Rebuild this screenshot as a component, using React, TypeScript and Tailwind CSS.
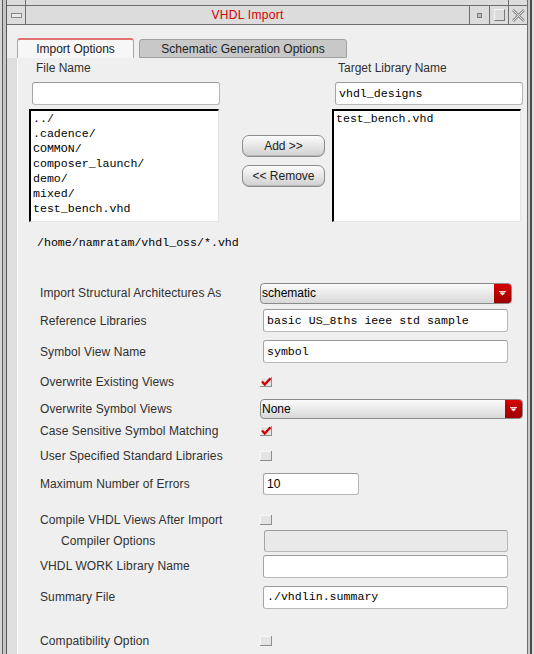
import type { ReactNode } from "react";

const sans = "font-['Liberation_Sans',Arial,sans-serif]";
const mono = "font-['Liberation_Mono','Courier_New',monospace]";

const CheckBox = ({ checked }: { checked?: boolean }) => (
    <svg width="12" height="10" viewBox="0 0 12 10">
        <rect x="0.5" y="0.5" width="11" height="9" fill="#e4e4e4" stroke="#f6f6f6" />
        <path d="M0 9.5H12M11.5 0V10" stroke="#8e8e8e" />
        {checked && <path d="M2 4.5 L4.8 7.6 L10.5 1.2" stroke="#cc0000" strokeWidth="2.3" fill="none" />}
    </svg>
);

const Dropdown = ({ value, className }: { value: string; className: string }) => (
    <div className={`flex rounded-[4px] border border-[#8a8a8a] bg-linear-to-b from-[#fbfbfb] to-[#d8d8d8] overflow-hidden ${className}`}>
        <div className={`flex-1 pl-[1px] text-[12px] text-black flex items-center ${sans}`}>{value}</div>
        <div className="w-[17px] bg-linear-to-b from-[#d70000] to-[#9c0000] flex items-center justify-center">
            <svg width="7" height="5" viewBox="0 0 7 5">
                <path d="M0 0.5H7" stroke="#ffd0d0" />
                <path d="M0.5 1.5 L6.5 1.5 L3.5 4.5 Z" fill="#ffffff" />
            </svg>
        </div>
    </div>
);

const Field = ({ value, className, fontClass, disabled }: { value?: string; className: string; fontClass?: string; disabled?: boolean }) => (
    <div
        className={`rounded-[3px] border border-[#b8b8b8] border-t-[#9a9a9a] border-l-[#a4a4a4] flex items-center pl-[3px] text-[11.6px] text-black ${disabled ? "bg-[#e9e9e9]" : "bg-white"} ${fontClass ?? mono} ${className}`}
    >
        {value}
    </div>
);

const Row = ({ label, className, indent, children }: { label: string; className: string; indent?: boolean; children?: ReactNode }) => (
    <div className={`flex items-center ${className}`}>
        <div className={`w-[242px] shrink-0 text-[12px] tracking-[0.1px] text-[#303030] ${indent ? "pl-[43px]" : "pl-[22px]"}`}>{label}</div>
        {children}
    </div>
);

const GelButton = ({ children }: { children: ReactNode }) => (
    <button className="h-[22px] w-[83px] rounded-[7px] border border-[#8c8c8c] bg-linear-to-b from-[#fcfcfc] to-[#d0d0d0] text-[12px] text-[#222] shadow-[inset_0_-1px_0_#b8b8b8]">
        {children}
    </button>
);

export default function App() {
    const files = ["../", ".cadence/", "COMMON/", "composer_launch/", "demo/", "mixed/", "test_bench.vhd"];

    return (
        <div className={`w-[534px] h-[654px] flex overflow-hidden bg-[#dcdcdc] ${sans}`}>
            {/* left window frame */}
            <div className="w-[7px] flex shrink-0">
                <div className="w-[2px] bg-[#d6d6d6]" />
                <div className="w-[1px] bg-[#5a5a5a]" />
                <div className="w-[3px] bg-[#c6c6c6]" />
                <div className="w-[1px] bg-[#5a5a5a]" />
            </div>

            <div className="flex-1 flex flex-col min-w-0">
                {/* top strip */}
                <div className="h-[6px] flex border-b border-[#6e6e6e] bg-[#dcdcdc]">
                    <div className="w-[19px] border-r border-[#6e6e6e]" />
                    <div className="flex-1" />
                    <div className="w-[19px] border-l border-[#6e6e6e]" />
                </div>

                {/* title bar */}
                <div className="h-[19px] flex border-b border-[#6e6e6e] bg-[#dcdcdc]">
                    <div className="w-[19px] border-r border-[#6e6e6e] flex items-center justify-center">
                        <div className="w-[11px] h-[5px] border border-[#8a8a8a] bg-[#e8e8e8]" />
                    </div>
                    <div className="flex-1 flex items-center justify-center text-[12px] tracking-[0.3px] text-[#d00000]">VHDL Import</div>
                    <div className="w-[20px] border-l border-[#6e6e6e] flex items-center justify-center">
                        <div className="w-[5px] h-[5px] border border-[#7a7a7a] bg-[#bdbdbd]" />
                    </div>
                    <div className="w-[19px] border-l border-[#6e6e6e] flex items-center justify-center">
                        <div className="w-[11px] h-[12px] border border-t-[#f4f4f4] border-l-[#f4f4f4] border-r-[#7a7a7a] border-b-[#7a7a7a]" />
                    </div>
                    <div className="w-[19px] border-l border-[#6e6e6e] flex items-center justify-center">
                        <svg width="13" height="13" viewBox="0 0 13 13">
                            <path d="M1 1 L12 12 M12 1 L1 12" stroke="#8a8a8a" strokeWidth="2.6" />
                            <path d="M1 1 L12 12 M12 1 L1 12" stroke="#e6e6e6" strokeWidth="1" />
                        </svg>
                    </div>
                </div>

                {/* body */}
                <div className="flex-1 flex flex-col bg-[#efefef] min-h-0">
                    {/* tabs */}
                    <div className="pt-[13px] pl-[10px] flex items-end gap-[5px]">
                        <div className="h-[20px] w-[117px] rounded-t-[3px] border-x border-[#a8a8a8] border-t-2 border-t-[#e07272] bg-[#f7f7f7] flex items-center justify-center text-[12px] text-[#222]">
                            Import Options
                        </div>
                        <div className="h-[19px] w-[208px] rounded-t-[3px] border border-[#a0a0a0] bg-[#c8c8c8] flex items-center justify-center text-[12px] text-[#222]">
                            Schematic Generation Options
                        </div>
                    </div>

                    <div className="flex-1 flex min-h-0">
                        <div className="w-[10px] bg-[#dedede]" />
                        <div className="flex-1 border-l border-white bg-[#efefef] flex flex-col overflow-hidden">
                            {/* file selection */}
                            <div className="flex pl-[11px]">
                                <div className="w-[191px] flex flex-col">
                                    <div className="h-[16px] mt-[2px] pl-[7px] text-[12px] leading-[16px] text-[#303030]">File Name</div>
                                    <Field className="h-[23px] mt-[6px] ml-[3px] w-[188px]" />
                                    <div className={`mt-[4px] w-[190px] h-[113px] bg-white border-t-2 border-l-2 border-black border-r border-b border-r-[#e4e4e4] border-b-[#e4e4e4] pl-[2px] text-[11.6px] leading-[15px] text-black ${mono}`}>
                                        {files.map((f) => (
                                            <div key={f} className="whitespace-pre">{f}</div>
                                        ))}
                                    </div>
                                </div>
                                <div className="ml-[22px] pt-[77px] flex flex-col gap-[8px]">
                                    <GelButton>Add &gt;&gt;</GelButton>
                                    <GelButton>&lt;&lt; Remove</GelButton>
                                </div>
                                <div className="ml-[7px] w-[190px] flex flex-col">
                                    <div className="h-[16px] mt-[2px] pl-[6px] text-[12px] leading-[16px] text-[#303030]">Target Library Name</div>
                                    <Field value="vhdl_designs" className="h-[23px] mt-[6px] ml-[3px] w-[188px]" />
                                    <div className={`mt-[4px] w-[189px] h-[113px] bg-white border-t-2 border-l-2 border-black border-r border-b border-r-[#e4e4e4] border-b-[#e4e4e4] pl-[2px] text-[11.6px] leading-[15px] text-black ${mono}`}>
                                        <div>test_bench.vhd</div>
                                    </div>
                                </div>
                            </div>

                            <div className={`mt-[14px] pl-[19px] h-[14px] leading-[14px] text-[11.6px] text-black ${mono}`}>/home/namratam/vhdl_oss/*.vhd</div>

                            {/* options form */}
                            <div className="mt-[31px] flex flex-col">
                                <Row label="Import Structural Architectures As" className="h-[24px]">
                                    <Dropdown value="schematic" className="h-[21px] w-[252px]" />
                                </Row>
                                <Row label="Reference Libraries" className="h-[31px]">
                                    <Field value="basic US_8ths ieee std sample" className="h-[23px] w-[245px] ml-[3px]" />
                                </Row>
                                <Row label="Symbol View Name" className="h-[31px]">
                                    <Field value="symbol" className="h-[23px] w-[245px] ml-[3px]" />
                                </Row>
                                <Row label="Overwrite Existing Views" className="h-[30px]">
                                    <CheckBox checked />
                                </Row>
                                <Row label="Overwrite Symbol Views" className="h-[24px]">
                                    <Dropdown value="None" className="h-[20px] w-[263px]" />
                                </Row>
                                <Row label="Case Sensitive Symbol Matching" className="h-[19px]">
                                    <CheckBox checked />
                                </Row>
                                <Row label="User Specified Standard Libraries" className="h-[32px]">
                                    <CheckBox />
                                </Row>
                                <Row label="Maximum Number of Errors" className="h-[24px]">
                                    <Field value="10" fontClass={sans} className="h-[22px] w-[96px] ml-[3px] text-[12px]" />
                                </Row>
                                <Row label="Compile VHDL Views After Import" className="h-[20px] mt-[14px]">
                                    <CheckBox />
                                </Row>
                                <Row label="Compiler Options" indent className="h-[22px]">
                                    <Field disabled className="h-[22px] w-[244px] ml-[4px]" />
                                </Row>
                                <Row label="VHDL WORK Library Name" className="h-[28px]">
                                    <Field className="h-[23px] w-[245px] ml-[3px]" />
                                </Row>
                                <Row label="Summary File" className="h-[34px]">
                                    <Field value="./vhdlin.summary" className="h-[23px] w-[245px] ml-[3px]" />
                                </Row>
                                <Row label="Compatibility Option" className="h-[20px] mt-[17px]">
                                    <CheckBox />
                                </Row>
                            </div>
                        </div>
                    </div>
                </div>
            </div>

            {/* right window frame */}
            <div className="w-[7px] flex shrink-0">
                <div className="w-[1px] bg-[#6e6e6e]" />
                <div className="w-[2px] bg-[#c8c8c8]" />
                <div className="w-[2px] bg-[#4a4a4a]" />
                <div className="w-[2px] bg-[#dcdcdc]" />
            </div>
        </div>
    );
}
